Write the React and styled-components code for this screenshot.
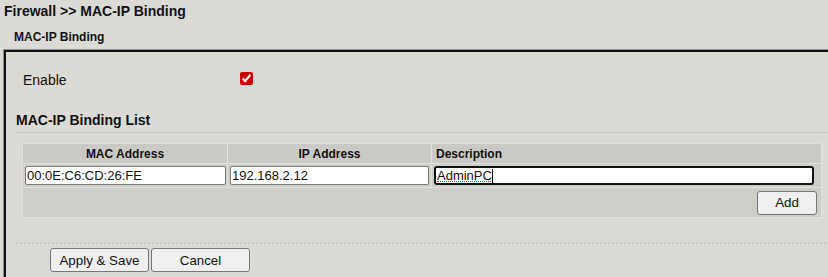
import React from "react";
import styled, { createGlobalStyle } from "styled-components";

const Global = createGlobalStyle`
  html, body {
    margin: 0;
    padding: 0;
    background: #dcdad5;
    overflow: hidden;
  }
  body {
    font-family: "Liberation Sans", Arial, sans-serif;
    color: #111;
  }
`;

const Page = styled.div`
  width: 828px;
  height: 277px;
  overflow: hidden;
`;

const Title = styled.div`
  padding: 3px 4px 0;
  font-size: 14px;
  font-weight: bold;
  line-height: 16px;
`;

const SubTitle = styled.div`
  margin-top: 11px;
  padding-left: 14px;
  font-size: 12px;
  font-weight: bold;
  line-height: 14px;
`;

const Panel = styled.div`
  margin: 6px 0 0 4px;
  width: 840px;
  height: 240px;
  border-top: 2px solid #111;
  border-left: 2px solid #111;
  box-shadow: -1px -1px 0 #8a8c8f;
`;

const EnableRow = styled.div`
  display: flex;
  align-items: flex-start;
  margin-top: 20px;
  padding-left: 17px;
  height: 16px;
`;

const Label = styled.span`
  width: 217px;
  font-size: 14px;
  line-height: 16px;
`;

const Check = styled.input`
  width: 13px;
  height: 13px;
  margin: 0;
  accent-color: #cc0000;
`;

const Section = styled.div`
  padding-left: 10px;
`;

const Heading = styled.div`
  margin-top: 24px;
  font-size: 14px;
  font-weight: bold;
  line-height: 16px;
`;

const Divider = styled.div`
  margin-top: 4px;
  height: 1px;
  background: #c9c7c2;
`;

const Table = styled.table`
  margin: 10px 0 0 6px;
  width: 800px;
  border-collapse: separate;
  border-spacing: 1px;
  background: #e2e0db;
  table-layout: fixed;
`;

const Th = styled.th`
  height: 19px;
  padding: 0 ${(p) => (p.$left ? "4px" : "0")};
  background: #cbc9c4;
  font-size: 12px;
  font-weight: bold;
  line-height: 14px;
  text-align: ${(p) => (p.$left ? "left" : "center")};
`;

const Td = styled.td`
  height: ${(p) => p.$h}px;
  padding: 0 ${(p) => p.$pr || 0}px 0 ${(p) => p.$pl || 0}px;
  background: #cfcdc8;
  text-align: ${(p) => (p.$right ? "right" : "left")};
  vertical-align: middle;
`;

const InputWrap = styled.div`
  position: relative;
  width: ${(p) => p.$w}px;
`;

const TextInput = styled.input`
  display: block;
  box-sizing: border-box;
  width: 100%;
  height: 19px;
  margin: 0;
  padding: 0 1px;
  border: ${(p) => (p.$focus ? "2px solid #111" : "1px solid #7a7a7a")};
  border-radius: ${(p) => (p.$focus ? "3px" : "2px")};
  background: #fff;
  font-family: "Liberation Sans", Arial, sans-serif;
  font-size: 13px;
  color: #111;
  outline: none;
`;

const SpellMark = styled.span`
  position: absolute;
  left: 3px;
  top: 15px;
  width: 54px;
  height: 0;
  border-top: 1px dotted #e02020;
  pointer-events: none;
`;

const Caret = styled.span`
  position: absolute;
  left: 58px;
  top: 3px;
  width: 1px;
  height: 14px;
  background: #111;
  pointer-events: none;
`;

const Button = styled.button`
  box-sizing: border-box;
  width: ${(p) => p.$w}px;
  height: 24px;
  margin: 0;
  padding: 0;
  border: 1px solid #767676;
  border-radius: 3px;
  background: #efefef;
  font-family: "Liberation Sans", Arial, sans-serif;
  font-size: 13.33px;
  color: #111;
`;

const Dotted = styled.div`
  margin-top: 24px;
  border-top: 2px dotted #cbc9c4;
`;

const ButtonBar = styled.div`
  display: flex;
  gap: 2px;
  margin: 4px 0 0 34px;
`;

export default function App() {
  return (
    <Page>
      <Global />
      <Title>Firewall &gt;&gt; MAC-IP Binding</Title>
      <SubTitle>MAC-IP Binding</SubTitle>
      <Panel>
        <EnableRow>
          <Label>Enable</Label>
          <Check type="checkbox" defaultChecked />
        </EnableRow>
        <Section>
          <Heading>MAC-IP Binding List</Heading>
          <Divider />
          <Table>
            <colgroup>
              <col style={{ width: 204 }} />
              <col style={{ width: 203 }} />
              <col />
            </colgroup>
            <thead>
              <tr>
                <Th>MAC Address</Th>
                <Th>IP Address</Th>
                <Th $left>Description</Th>
              </tr>
            </thead>
            <tbody>
              <tr>
                <Td $h={23} $pl={2}>
                  <InputWrap $w={201}>
                    <TextInput defaultValue="00:0E:C6:CD:26:FE" />
                  </InputWrap>
                </Td>
                <Td $h={23} $pl={2}>
                  <InputWrap $w={199}>
                    <TextInput defaultValue="192.168.2.12" />
                  </InputWrap>
                </Td>
                <Td $h={23} $pl={2}>
                  <InputWrap $w={380}>
                    <TextInput $focus defaultValue="AdminPC" />
                    <SpellMark />
                    <Caret />
                  </InputWrap>
                </Td>
              </tr>
              <tr>
                <Td $h={29} colSpan={3} $right $pr={4}>
                  <Button $w={60}>Add</Button>
                </Td>
              </tr>
            </tbody>
          </Table>
          <Dotted />
          <ButtonBar>
            <Button $w={99}>Apply &amp; Save</Button>
            <Button $w={99}>Cancel</Button>
          </ButtonBar>
        </Section>
      </Panel>
    </Page>
  );
}
